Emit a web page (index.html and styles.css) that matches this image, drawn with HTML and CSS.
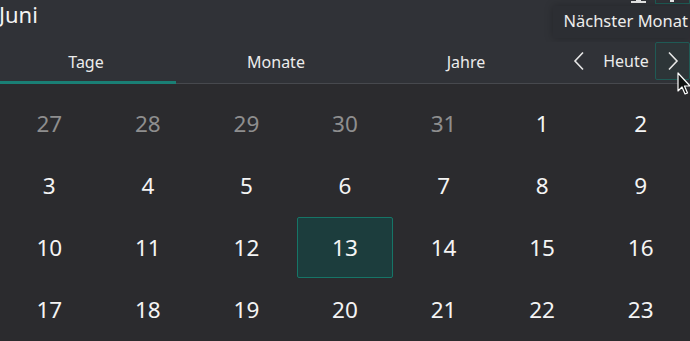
FILE: index.html
```html
<!DOCTYPE html>
<html lang="de">
<head>
<meta charset="utf-8">
<link rel="stylesheet" href="styles.css">
</head>
<body>
<div class="app">
  <header class="head">
    <h1 class="title">Juni</h1>
    <div class="topicons">
      <span class="ico-a"></span>
      <span class="ico-b"></span>
    </div>
    <div class="tooltip">Nächster Monat</div>
  </header>
  <nav class="tabbar">
    <div class="tabs">
      <div class="tab active">Tage</div>
      <div class="tab">Monate</div>
      <div class="tab">Jahre</div>
    </div>
    <div class="nav">
      <button class="navbtn prev" aria-label="Vorheriger Monat">
        <svg width="12" height="20" viewBox="0 0 12 20"><polyline points="10,1.5 2,10 10,18.5" fill="none" stroke="#e6e6e6" stroke-width="1.6"/></svg>
      </button>
      <button class="today">Heute</button>
      <button class="navbtn next" aria-label="Nächster Monat">
        <svg width="12" height="20" viewBox="0 0 12 20"><polyline points="2,1.5 10,10 2,18.5" fill="none" stroke="#e6e6e6" stroke-width="1.6"/></svg>
      </button>
    </div>
    <svg class="cursor" width="14" height="24" viewBox="0 0 14 24"><path d="M1 1 L1 19 L5 15 L8 22 L10.5 21 L7.5 14 L13 14 Z" fill="#111" stroke="#fff" stroke-width="1.2" stroke-linejoin="round"/></svg>
  </nav>
  <main class="grid">
    <div class="day other">27</div><div class="day other">28</div><div class="day other">29</div><div class="day other">30</div><div class="day other">31</div><div class="day">1</div><div class="day">2</div>
    <div class="day">3</div><div class="day">4</div><div class="day">5</div><div class="day">6</div><div class="day">7</div><div class="day">8</div><div class="day">9</div>
    <div class="day">10</div><div class="day">11</div><div class="day">12</div><div class="day selected">13</div><div class="day">14</div><div class="day">15</div><div class="day">16</div>
    <div class="day">17</div><div class="day">18</div><div class="day">19</div><div class="day">20</div><div class="day">21</div><div class="day">22</div><div class="day">23</div>
  </main>
</div>
</body>
</html>
```

FILE: styles.css
```css
* { box-sizing: border-box; }
html, body {
  margin: 0;
  padding: 0;
  width: 690px;
  height: 341px;
  overflow: hidden;
  background: #2b2b2e;
  font-family: "Noto Sans", "Open Sans", sans-serif;
  color: #f2f2f2;
}
.app {
  width: 690px;
  height: 341px;
  display: flex;
  flex-direction: column;
}
.head {
  position: relative;
  height: 42px;
  background: #303237;
  display: flex;
  align-items: flex-start;
}
.title {
  margin: -1px 0 0 -1px;
  font-size: 22px;
  font-weight: 400;
  line-height: 30px;
  color: #f4f4f4;
}
.topicons {
  position: absolute;
  top: 0;
  right: 0;
  width: 70px;
  height: 4px;
}
.ico-a {
  position: absolute;
  left: 11px;
  top: 1px;
  width: 15px;
  height: 2px;
  background: #e8e8e8;
}
.ico-a::after {
  content: "";
  position: absolute;
  left: 5px;
  top: -2px;
  width: 5px;
  height: 2px;
  background: #e8e8e8;
}
.ico-b {
  position: absolute;
  left: 35px;
  top: 0;
  width: 35px;
  height: 4px;
  border: 1px solid #1f5c56;
  border-top: none;
}
.ico-b::after {
  content: "";
  position: absolute;
  left: 14px;
  top: -1px;
  width: 4px;
  height: 3px;
  background: #e8e8e8;
}
.tooltip {
  position: absolute;
  right: 0;
  top: 6px;
  padding: 4px 2px 6px 10px;
  background: #2c2e33;
  box-shadow: 0 0 8px rgba(0,0,0,0.25);
  font-size: 16.5px;
  line-height: 22px;
  color: #ececec;
  white-space: nowrap;
}
.tabbar {
  position: relative;
  height: 42px;
  background: #303237;
  border-bottom: 1px solid #47494e;
  display: flex;
  align-items: stretch;
  justify-content: space-between;
}
.tabs {
  display: flex;
  margin-left: -9px;
}
.tab {
  width: 190px;
  display: flex;
  align-items: center;
  justify-content: center;
  font-size: 16px;
  color: #ececec;
  position: relative;
  padding-bottom: 1px;
}
.tab.active::after {
  content: "";
  position: absolute;
  left: 9px;
  width: 176px;
  bottom: -1px;
  height: 3px;
  background: #1a7f75;
}
.nav {
  display: flex;
  align-items: flex-start;
}
.navbtn, .today {
  background: none;
  border: none;
  color: #ececec;
  font-family: inherit;
  padding: 0;
  display: flex;
  align-items: center;
  justify-content: center;
}
.prev {
  width: 30px;
  height: 38px;
}
.today {
  font-size: 16px;
  width: 58px;
  height: 38px;
  margin-left: 3px;
}
.next {
  width: 35px;
  height: 38px;
  border: 1px solid #1f5a55;
  border-radius: 2px;
  background: #2d3538;
}
.cursor {
  position: absolute;
  left: 677px;
  top: 30px;
}
.grid {
  flex: 1;
  display: grid;
  grid-template-columns: repeat(7, 1fr);
  grid-auto-rows: 62px;
  padding-top: 9px;
}
.day {
  display: flex;
  align-items: center;
  justify-content: center;
  font-size: 22.5px;
  color: #f4f4f4;
  padding-bottom: 1px;
}
.day.other {
  color: #8e8e8e;
}
.day.selected {
  margin: 0 1px 1px 1px;
  background: #1c3d3d;
  border: 1px solid #167567;
  border-radius: 2px;
}
```
